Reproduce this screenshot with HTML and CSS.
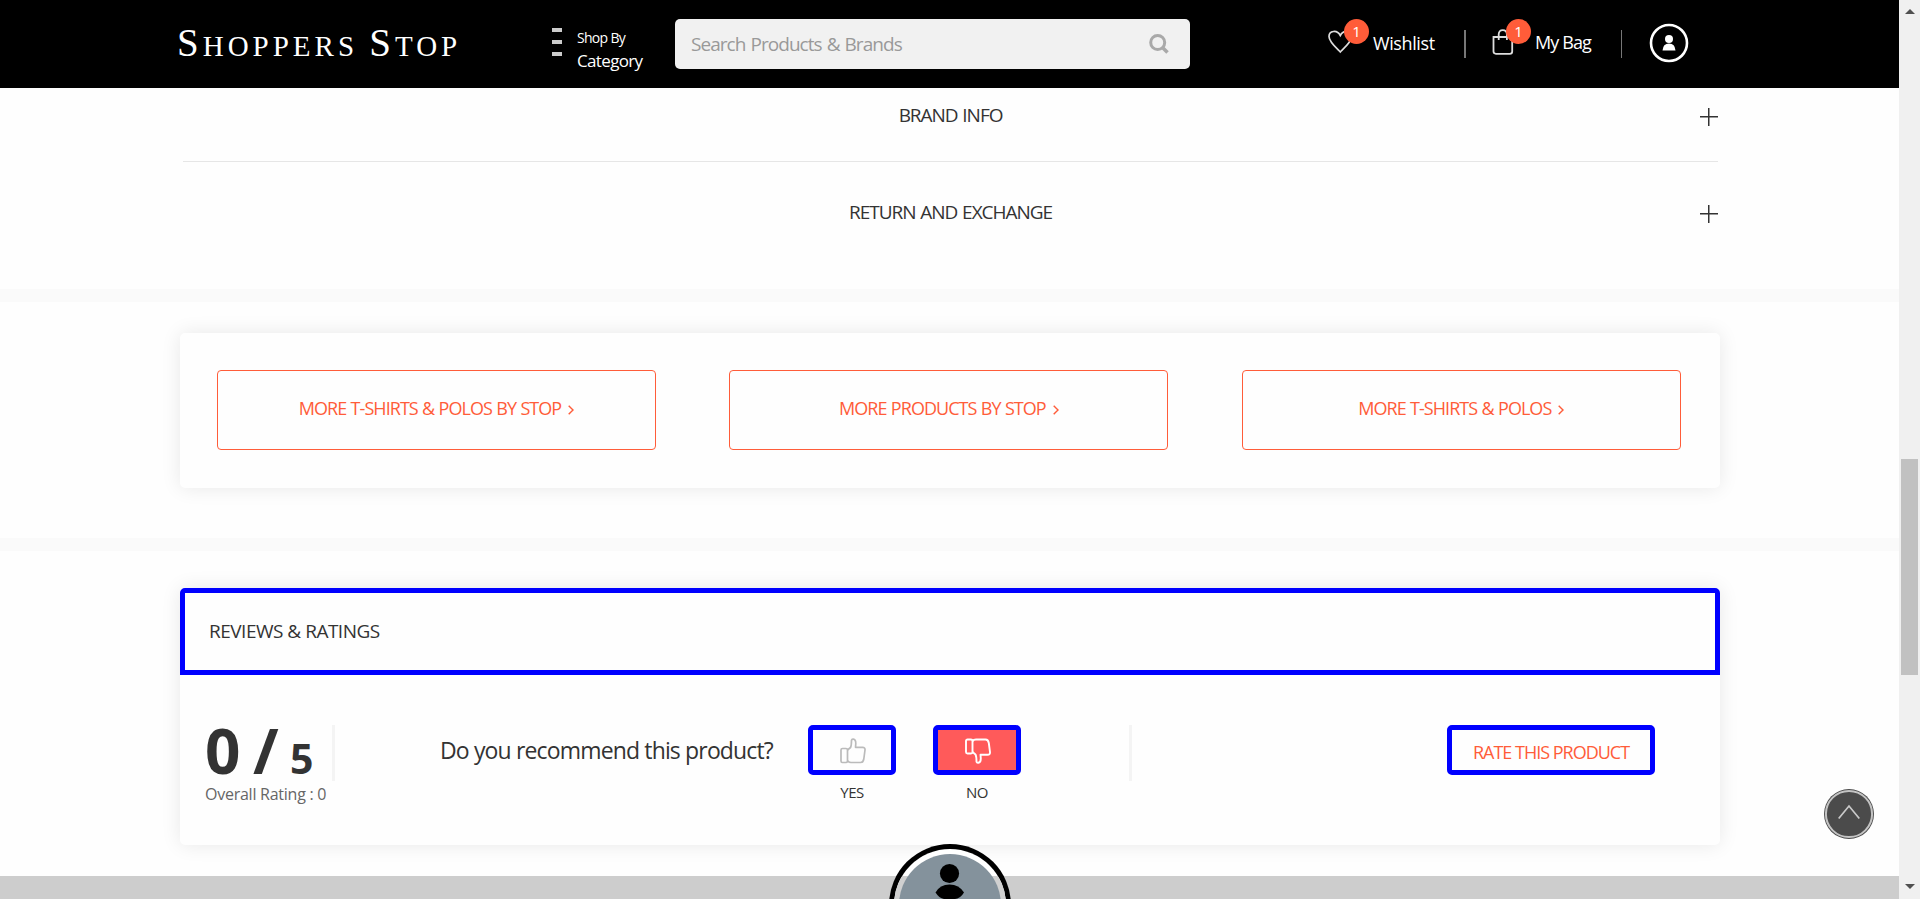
FILE: index.html
```
<!DOCTYPE html>
<html lang="en">
<head>
<meta charset="utf-8">
<title>Shoppers Stop</title>
<link rel="stylesheet" href="styles.css">
</head>
<body>
<div class="page">
  <header class="header">
    <div class="logo"><span class="cap">S</span>HOPPERS <span class="cap">S</span>TOP</div>
    <div class="menu-icon"><i></i><i></i><i></i></div>
    <div class="shop"><span class="shop-small">Shop By</span><span class="shop-big">Category</span></div>
    <div class="search">
      <span>Search Products &amp; Brands</span>
      <svg width="20" height="20" viewBox="0 0 20 20" fill="none" stroke="#a9a9a9"><circle cx="8.7" cy="8.5" r="7" stroke-width="3"/><path d="M13.5 13.5L18.5 18.5" stroke-width="3.6"/></svg>
    </div>
    <a class="action wish">
      <svg width="25" height="24" viewBox="0 0 25 24" fill="none" stroke="#ddd" stroke-width="1.7"><path d="M12.300 22C10 19.500 1 12 1 6.500C1 .8 9 -.8 12.300 5.500C15.600 -.8 23.600 .8 23.600 6.500C23.600 12 14.600 19.500 12.300 22Z"/></svg>
      <b class="badge">1</b><span class="t-wish">Wishlist</span>
    </a>
    <i class="sep sep-wide"></i>
    <a class="action bag">
      <svg width="22" height="26" viewBox="0 0 22 26" fill="none" stroke="#ddd" stroke-width="1.8"><path d="M1.500 8H20.200V22.500Q20.200 24.800 17.800 24.800H3.900Q1.500 24.800 1.500 22.500Z"/><path d="M6.700 11V5.500Q6.700 1.200 10.800 1.200T14.900 5.500V11"/></svg>
      <b class="badge">1</b><span class="t-bag">My Bag</span>
    </a>
    <i class="sep"></i>
    <svg class="account" width="40" height="40" viewBox="0 0 40 40"><circle cx="20" cy="20" r="18" fill="none" stroke="#fff" stroke-width="2.600"/><circle cx="20" cy="16" r="4" fill="#fff"/><path d="M13.500 27.500Q14 20.500 20 20.500T26.500 27.500Z" fill="#fff"/></svg>
  </header>

  <section class="accordion">
    <div class="row first"><span>BRAND INFO</span><i class="plus"></i></div>
    <div class="row second"><span>RETURN AND EXCHANGE</span><i class="plus"></i></div>
  </section>
  <div class="band"></div>

  <section class="card links">
    <a class="more"><span>MORE T-SHIRTS &amp; POLOS BY STOP</span><svg class="chev" viewBox="0 0 6 10"><path d="M.7.7L5 5L.7 9.300"/></svg></a>
    <a class="more"><span>MORE PRODUCTS BY STOP</span><svg class="chev" viewBox="0 0 6 10"><path d="M.7.7L5 5L.7 9.300"/></svg></a>
    <a class="more"><span>MORE T-SHIRTS &amp; POLOS</span><svg class="chev" viewBox="0 0 6 10"><path d="M.7.7L5 5L.7 9.300"/></svg></a>
  </section>
  <div class="band"></div>

  <section class="card reviews">
    <h2 class="reviews-head"><span>REVIEWS &amp; RATINGS</span></h2>
    <div class="reviews-body">
      <div class="score">
        <div class="score-num"><span class="zero">0</span><span class="slash">/</span><span class="five">5</span></div>
        <div class="overall">Overall Rating : 0</div>
      </div>
      <i class="vline"></i>
      <div class="question">Do you recommend this product?</div>
      <div class="vote yes">
        <a class="box"><svg width="26" height="26" viewBox="0 0 26 26" fill="none" stroke="#bbb" stroke-width="1.700" stroke-linejoin="round"><rect x="1" y="10.500" width="6.500" height="14" rx="1.500"/><path d="M7.500 12L10.500 9.500Q11.500 7.500 11.500 2.200Q11.800 1 13.300 1.200Q15.800 1.600 15.800 5.500L15.500 9.300H22.500Q25.300 9.300 25 12L23.800 21Q23.200 24.500 20.500 24.500H11Q8.500 24.500 7.500 22.800"/></svg></a>
        <span>YES</span>
      </div>
      <div class="vote no">
        <a class="box active"><svg width="26" height="26" viewBox="0 0 26 26" fill="none" stroke="#fff" stroke-width="1.900" stroke-linejoin="round"><g transform="translate(0 26) scale(1 -1)"><rect x="1" y="10.500" width="6.500" height="14" rx="1.500"/><path d="M7.500 12L10.500 9.500Q11.500 7.500 11.500 2.200Q11.800 1 13.300 1.200Q15.800 1.600 15.800 5.500L15.500 9.300H22.500Q25.300 9.300 25 12L23.800 21Q23.200 24.500 20.500 24.500H11Q8.500 24.500 7.500 22.800"/></g></svg></a>
        <span>NO</span>
      </div>
      <i class="vline vline-2"></i>
      <a class="rate"><span>RATE THIS PRODUCT</span></a>
    </div>
  </section>
  <footer class="footer"></footer>
</div>
<div class="scrollbar"><i class="up"></i><i class="thumb"></i><i class="down"></i></div>
<svg class="to-top" width="50" height="50" viewBox="0 0 50 50"><circle cx="25" cy="25" r="25" fill="#4b4b4b"/><circle cx="25" cy="25" r="23.100" fill="none" stroke="#c4c4c4" stroke-width="2"/><path d="M14.700 29.500L25 17L35.300 29.500" fill="none" stroke="#c9c9c9" stroke-width="1.700"/></svg>
<svg class="avatar" width="122" height="55" viewBox="0 0 122 55"><circle cx="61" cy="61" r="61" fill="#000"/><circle cx="61" cy="61" r="56" fill="#fff"/><path d="M0 32H122V61H0Z" fill="#d0d0d0" clip-path="url(#ring)"/><clipPath id="ring"><circle cx="61" cy="61" r="56"/></clipPath><circle cx="61" cy="61" r="51" fill="#84929c"/><circle cx="60.500" cy="29.500" r="9.600"/><path d="M46.500 48.500Q51 40.500 60.500 40.500T75 48.500Q71 55 66 55H55Q50 54 46.500 48.500Z"/></svg>
</body>
</html>
```
FILE: styles.css
```
* { box-sizing: border-box; }
body { margin: 0; width: 1920px; height: 899px; overflow: hidden; display: flex; position: relative; background: #fefefe; font-family: "Open Sans", "Noto Sans", sans-serif; letter-spacing: -0.5px; color: #333; }
i { display: block; flex: none; }
svg { display: block; flex: none; }
span, a { white-space: nowrap; }
.page { width: 1899px; height: 899px; display: flex; flex-direction: column; overflow: hidden; }

.header { flex: none; height: 88px; background: #000; color: #fff; display: flex; align-items: flex-start; padding-left: 177px; }
.logo { width: 375px; height: 50px; margin-top: 21px; font: 29px/50px "Liberation Serif", serif; letter-spacing: 4px; white-space: nowrap; }
.logo .cap { font-size: 39px; line-height: 40px; }
.menu-icon { width: 25px; margin-top: 28px; display: flex; flex-direction: column; gap: 8px; }
.menu-icon i { width: 10px; height: 4px; background: #ccc; }
.shop { width: 98px; display: flex; flex-direction: column; padding-top: 28px; }
.shop-small { font-size: 14px; line-height: 20px; letter-spacing: -0.7px; }
.shop-big { font-size: 17px; line-height: 26px; letter-spacing: -0.65px; }
.search { width: 515px; height: 50px; background: #f1f1f1; border-radius: 5px; margin-top: 19px; display: flex; align-items: center; justify-content: space-between; padding: 0 21px 0 16px; color: #999; font-size: 19px; letter-spacing: -0.95px; word-spacing: 1px; }
.action { display: flex; align-items: flex-start; position: relative; font-size: 18px; line-height: 26px; margin-top: 29px; }
.wish { margin-left: 138px; width: 136px; padding-top: 1px; }
.bag { margin-left: 26px; width: 129px; letter-spacing: -0.9px; }
.badge { position: absolute; top: -10px; left: 16px; width: 25px; height: 25px; border-radius: 50%; background: #ff5c39; text-align: center; font-weight: 400; font-size: 15px; line-height: 25px; letter-spacing: 0; }
.bag .badge { left: 14px; }
.t-wish { margin-left: 20px; letter-spacing: -0.4px; }
.t-bag { margin-left: 21px; }
.sep { width: 1px; height: 28px; margin-top: 30px; background: #777; }
.sep-wide { width: 2px; }
.account { margin: 23px 0 0 27px; }

.accordion { flex: none; width: 1535px; margin-left: 183px; height: 201px; font-size: 19px; letter-spacing: -1.05px; word-spacing: 1px; }
.row { position: relative; display: flex; justify-content: center; line-height: 26px; }
.first { height: 74px; padding-top: 14px; border-bottom: 1px solid #e6e6e6; }
.second { padding-top: 37px; }
.plus { position: absolute; right: 0; bottom: 35px; width: 18px; height: 18px; background: linear-gradient(#333, #333) center / 18px 1.500px no-repeat, linear-gradient(#333, #333) center / 1.500px 18px no-repeat; }
.second .plus { bottom: 2px; }
.band { flex: none; height: 13px; background: #fafafa; }

.card { flex: none; width: 1540px; margin-left: 180px; background: #fefefe; border-radius: 5px; box-shadow: 0 0 20px rgba(0,0,0,.09); }
.links { height: 155px; margin-top: 31px; margin-bottom: 50px; padding: 37px 37px 0; display: grid; grid-template-columns: repeat(3, 439px); column-gap: 73.400px; }
.more { height: 80px; border: 1px solid #ff5c39; border-radius: 4px; color: #ff5c39; display: flex; justify-content: center; align-items: center; gap: 7px; font-size: 18px; letter-spacing: -0.95px; word-spacing: 0.600px; padding-bottom: 4px; }
.chev { width: 6px; height: 10px; fill: none; stroke: #ff5c39; stroke-width: 1.400; margin-top: 3px; }

.reviews { margin-top: 37px; height: 257px; }
.reviews-head { margin: 0; height: 87px; border: 5px solid #00f; border-radius: 5px 5px 0 0; padding-left: 24px; font-size: 19px; font-weight: 400; line-height: 76px; }
.reviews-body { display: flex; align-items: flex-start; padding: 50px 0 0 25px; }
.score { width: 127px; }
.score-num { height: 59px; display: flex; align-items: baseline; font-weight: 700; font-size: 62px; line-height: 50px; letter-spacing: 0; }
.zero { width: 48px; }
.slash { width: 37px; }
.five { font-size: 41px; }
.overall { font-size: 16px; line-height: 20px; letter-spacing: -0.25px; color: #666; white-space: nowrap; }
.vline { width: 3px; height: 56px; background: #f4f4f4; }
.question { width: 473px; padding-left: 105px; font-size: 23px; letter-spacing: -0.85px; line-height: 50px; white-space: nowrap; }
.vote { width: 88px; display: flex; flex-direction: column; align-items: center; font-size: 15px; line-height: 22px; gap: 6px; }
.no { margin-left: 37px; }
.box { width: 88px; height: 50px; border: 5px solid #00f; border-radius: 5px; display: flex; align-items: center; justify-content: center; padding: 2px 0 0 2px; }
.active { background: #ff5a5a; }
.vline-2 { margin-left: 108px; }
.rate { margin-left: 315px; width: 208px; height: 50px; border: 5px solid #00f; border-radius: 5px; color: #ff5c39; font-size: 18px; letter-spacing: -1px; line-height: 44px; text-align: center; }
.footer { flex: none; margin-top: 31px; height: 23px; background: #cdcdcd; }

.scrollbar { width: 21px; height: 899px; background: #f0f0f0; display: flex; flex-direction: column; align-items: center; padding: 9px 0 10px; }
.up { border: 5px solid transparent; border-top: 0; border-bottom: 5px solid #505050; }
.thumb { width: 17px; height: 216px; margin: 445px 0 auto; background: #c1c1c1; }
.down { border: 5px solid transparent; border-bottom: 0; border-top: 5px solid #505050; }
.to-top { position: absolute; left: 1824px; top: 789px; }
.avatar { position: absolute; left: 889px; top: 844px; }
```
